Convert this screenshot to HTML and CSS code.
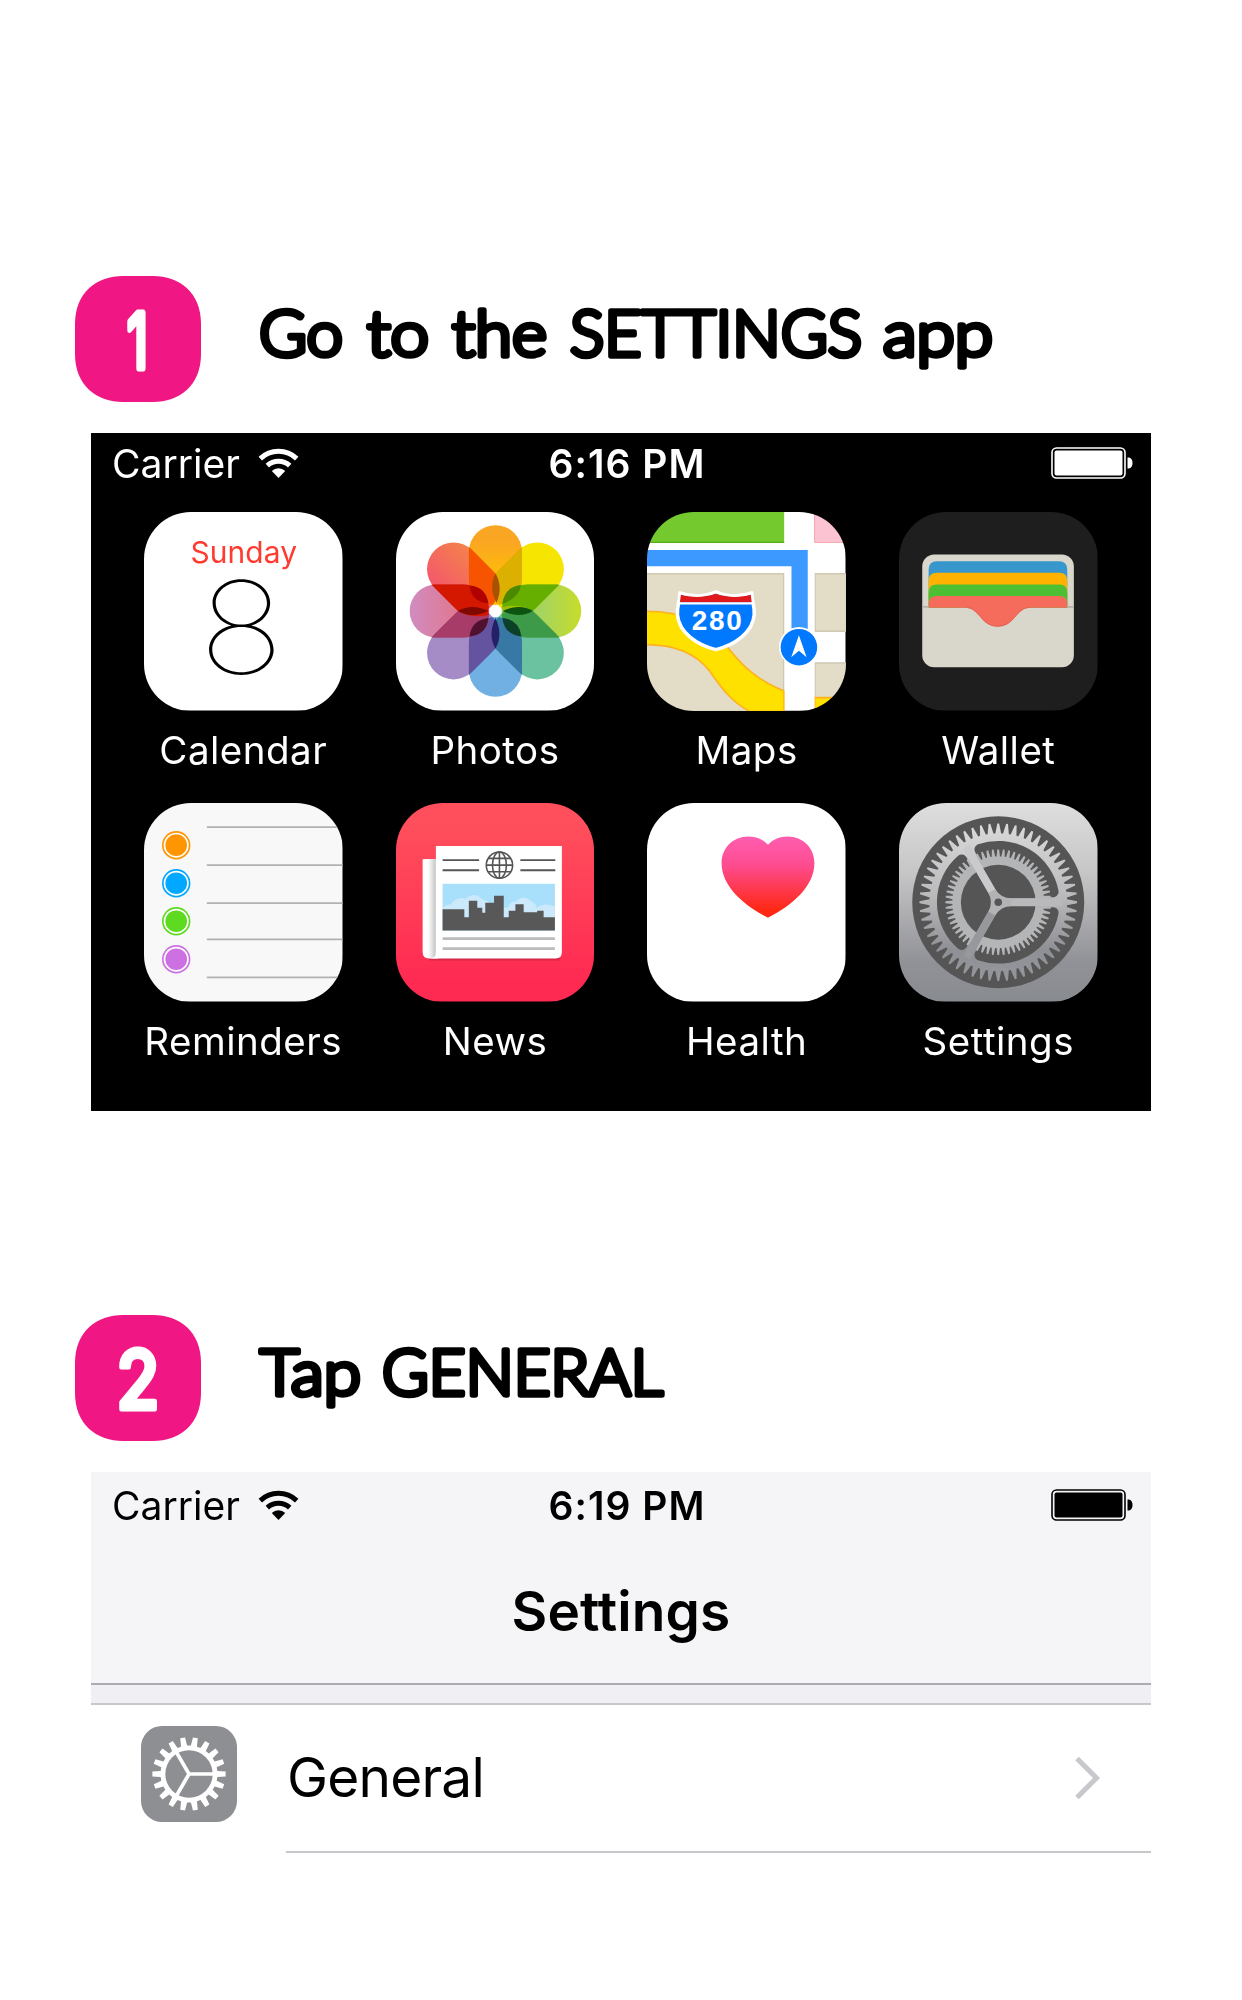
FILE: index.html
```html
<!DOCTYPE html>
<html lang="en">
<head>
<meta charset="utf-8">
<title>Setup steps</title>
<link rel="stylesheet" href="styles.css">
</head>
<body>
<main class="page">
  <section class="step">
    <header class="step-head">
      <svg class="badge" viewBox="0 0 126 126"><path class="badge-bg" d="M48 0H78C104 0 126 16 126 48V78C126 110 104 126 78 126H48C22 126 0 110 0 78V48C0 16 22 0 48 0Z"/><text class="digit one" transform="translate(62.500 92) scale(.66 1)">1</text></svg>
      <svg class="title" viewBox="0 0 800 126">
        <text x="2" y="79.500" textLength="84" lengthAdjust="spacingAndGlyphs">Go</text>
        <text x="110" y="79.500" textLength="62" lengthAdjust="spacingAndGlyphs">to</text>
        <text x="195" y="79.500" textLength="95" lengthAdjust="spacingAndGlyphs">the</text>
        <text x="313" y="79.500" textLength="292" lengthAdjust="spacingAndGlyphs">SETTINGS</text>
        <text x="626" y="79.500" textLength="110" lengthAdjust="spacingAndGlyphs">app</text>
      </svg>
    </header>
    <div class="screen home">
      <div class="status">
        <div class="carrier">Carrier
          <svg class="wifi" viewBox="0 0 41 32"><path class="arc" d="M2.300 11.600A26.500 26.500 0 0 1 38.700 11.600M9.300 18.700A16.500 16.500 0 0 1 31.700 18.700"/><path class="tip" d="M20.500 31L13.800 24A9.500 9.500 0 0 1 27.200 24Z"/></svg>
        </div>
        <div class="clock">6:16 PM</div>
        <svg class="battery" viewBox="0 0 82 32"><rect class="shell" x="1" y="1" width="73" height="30" rx="4.500"/><rect class="charge" x="3.500" y="3.500" width="68" height="25" rx="2"/><path class="charge" d="M76.500 10.500C80 10.500 81.500 12.500 81.500 16S80 21.500 76.500 21.500Z"/></svg>
      </div>
      <div class="apps">
        <figure class="app">
          <svg class="icon" viewBox="0 0 199 199"><rect width="199" height="199" fill="#fff"/><text class="weekday" x="100" y="51" textLength="107">Sunday</text><text class="day" transform="translate(97.500 162.500) scale(1.110 1)">8</text></svg>
          <figcaption>Calendar</figcaption>
        </figure>
        <figure class="app">
          <svg class="icon" viewBox="0 0 199 199">
            <defs>
              <linearGradient id="pOrange" x1="0" y1="0" x2="0" y2="1"><stop offset=".2" stop-color="#faa623"/><stop offset=".8" stop-color="#ffc400"/></linearGradient>
              <linearGradient id="pRed" x1="0" y1="0" x2="1" y2="0"><stop offset="0" stop-color="#f4586a"/><stop offset="1" stop-color="#f4824c"/></linearGradient>
              <linearGradient id="pLime" x1="0" y1="0" x2="0" y2="1"><stop offset="0" stop-color="#c8dc2a"/><stop offset=".5" stop-color="#a5d45e"/></linearGradient>
              <linearGradient id="pPink" x1="0" y1="0" x2="0" y2="1"><stop offset="0" stop-color="#d08cc0"/><stop offset=".6" stop-color="#e07890"/></linearGradient>
            </defs>
            <rect width="199" height="199" fill="#fff"/>
            <g class="petals" transform="translate(99.700 99.200)">
              <rect x="-26.600" y="-86" width="53.200" height="80" rx="26.600" fill="url(#pOrange)"/>
              <rect x="-26.600" y="-86" width="53.200" height="80" rx="26.600" fill="#f6e500" transform="rotate(45)"/>
              <rect x="-26.600" y="-86" width="53.200" height="80" rx="26.600" fill="url(#pLime)" transform="rotate(90)"/>
              <rect x="-26.600" y="-86" width="53.200" height="80" rx="26.600" fill="#6bc2a0" transform="rotate(135)"/>
              <rect x="-26.600" y="-86" width="53.200" height="80" rx="26.600" fill="#70b0e2" transform="rotate(180)"/>
              <rect x="-26.600" y="-86" width="53.200" height="80" rx="26.600" fill="#a58cc6" transform="rotate(225)"/>
              <rect x="-26.600" y="-86" width="53.200" height="80" rx="26.600" fill="url(#pPink)" transform="rotate(270)"/>
              <rect x="-26.600" y="-86" width="53.200" height="80" rx="26.600" fill="url(#pRed)" transform="rotate(315)"/>
            </g>
            <g transform="translate(99.700 99.200)">
              <path fill="#dcb000" d="M4 -7Q-8 -24 0 -37.600L26.600 -64.200V-32.600Q26 -12 9 -7Z"/>
              <path fill="#66ae00" d="M7 -9Q12 -26.600 32.600 -26.600H64.200L37.600 0Q24 -8 7 -4Z"/>
              <path fill="#3c9a48" d="M7 4Q24 -8 37.600 0L64.200 26.600H32.600Q12 26.600 7 9Z"/>
              <path fill="#3878a4" d="M4 7Q-8 24 0 37.600L26.600 64.200V32.600Q26 12 9 7Z"/>
              <path fill="#6454a0" d="M-4 7Q8 24 0 37.600L-26.600 64.200V32.600Q-26 12 -9 7Z"/>
              <path fill="#a83c68" d="M-7 4Q-24 -8 -37.600 0L-64.200 26.600H-32.600Q-12 26.600 -7 9Z"/>
              <path fill="#d41800" d="M-7 -9Q-12 -26.600 -32.600 -26.600H-64.200L-37.600 0Q-24 8 -7 4Z"/>
              <path fill="#f65400" d="M-4 -7Q8 -24 0 -37.600L-26.600 -64.200V-32.600Q-26 -12 -9 -7Z"/>
              <path fill="#a85200" d="M0 -37.600Q8 -24 1 -8Q-7 -24 0 -37.600Z"/>
              <path fill="#4c8800" d="M7 -7Q9 -24 25.500 -26Q24 -13 7 -7Z"/>
              <path fill="#0c5410" d="M7 0Q24 -8 37.600 0Q24 8 7 0Z"/>
              <path fill="#0c4028" d="M7 7Q24 9 26 25.500Q9 24 7 7Z"/>
              <path fill="#242068" d="M0 7Q8 24 0 37.600Q-8 24 0 7Z"/>
              <path fill="#501030" d="M-7 7Q-24 9 -26 25.500Q-9 24 -7 7Z"/>
              <path fill="#800800" d="M-7 0Q-24 8 -37.600 0Q-24 -8 -7 0Z"/>
              <path fill="#b00000" d="M-7 -7Q-24 -9 -26 -25.500Q-9 -24 -7 -7Z"/>
            </g>
            <circle cx="99.700" cy="99.200" r="6" fill="#fff"/>
          </svg>
          <figcaption>Photos</figcaption>
        </figure>
        <figure class="app">
          <svg class="icon" viewBox="0 0 199 199">
            <rect width="199" height="199" fill="#fff"/>
            <path fill="#74c92f" d="M0 0H137.500V31H0Z"/><path fill="#58b010" d="M0 29.800H137.500V31H0Z"/>
            <path fill="#fcc3d2" stroke="#f3a9ae" d="M168 -1H200V30.500H168Z"/>
            <path fill="#e3dcc7" stroke="#d0c8b2" stroke-width="1.500" d="M-1 62H137V200H-1ZM168.500 62H200V119.500H168.500ZM168.500 151.500H200V200H168.500Z"/>
            <path fill="#ffe100" stroke="#ffb21c" stroke-width="1.700" d="M-1 99.500C32 99.500 62 110 82 137C98 157 112 169 137.400 179.500V200H103C82 189 72 172 62 158.500C48 141 28 133 -1 133ZM168 186H200V200H168Z"/>
            <path fill="#fff" d="M138 61H168V199H138Z"/>
            <path fill="none" stroke="#3b99ff" stroke-width="16.300" d="M0 46.200H153V120"/>
            <path fill="#0079ff" stroke="#fff" stroke-width="3.500" stroke-linejoin="round" d="M33 81C44 85 57 85 69 80C81 85 94 85 105 81C105 90 108 93 107.500 103C106 121 88 133 69 138C50 133 32 121 30.500 103C30 93 33 90 33 81Z"/>
            <path fill="#df191e" d="M34 83C45 86 57 86 69 82C81 86 93 86 104 83L105 90.500H33Z"/><path fill="#fff" d="M32 90.500H106V92.700H32Z"/>
            <text class="route" x="70" y="118.700" textLength="50">280</text>
            <circle cx="152.300" cy="135.300" r="20" fill="#fff"/><circle cx="152.300" cy="135.500" r="18.300" fill="#0079ff"/>
            <path fill="#fff" d="M152.300 123.500L160 145.500L152.300 139L144.600 145.500Z"/>
          </svg>
          <figcaption>Maps</figcaption>
        </figure>
        <figure class="app">
          <svg class="icon" viewBox="0 0 199 199">
            <rect width="199" height="199" fill="#1e1e1e"/>
            <rect x="23.300" y="42.700" width="152" height="113" rx="12" fill="#d9d6cb"/>
            <path fill="#3797cd" d="M29.700 96V58Q29.700 49.300 38 49.300H160.500Q168.700 49.300 168.700 58V96Z"/>
            <path fill="#ffb200" d="M29.700 96V69Q29.700 61 38 61H160.500Q168.700 61 168.700 69V96Z"/>
            <path fill="#4dbf33" d="M29.700 96V81Q29.700 72.700 38 72.700H160.500Q168.700 72.700 168.700 81V96Z"/>
            <path fill="#f66c5c" d="M29.700 96V92Q29.700 84.300 38 84.300H160.500Q168.700 84.300 168.700 92V96H131C117 97 116 115 99 115S81 97 67 96Z"/>
            <path fill="none" stroke="#d55a4a" stroke-width="1" opacity=".6" d="M68 95.500C82 97 82 114.500 99 114.500S116 97 130 95.500"/>
            <path fill="#b5b2ab" d="M23.300 94.300H29.700V96H23.300ZM168.700 94.300H175.300V96H168.700Z"/>
          </svg>
          <figcaption>Wallet</figcaption>
        </figure>
        <figure class="app">
          <svg class="icon" viewBox="0 0 199 199">
            <rect width="199" height="199" fill="#f8f8f8"/>
            <path stroke="#b1b1b1" stroke-width="1.700" d="M63 24.200H199M63 62.300H199M63 100.300H199M63 136.700H199M63 174.800H199"/>
            <g stroke-width="1.700">
              <g stroke="#ff9500" fill="#ff9500"><circle cx="32.300" cy="42.300" r="13.400" fill="#fff"/><circle cx="32.300" cy="42.300" r="10"/></g>
              <g stroke="#00a8ff" fill="#00a8ff"><circle cx="32.300" cy="80.400" r="13.400" fill="#fff"/><circle cx="32.300" cy="80.400" r="10"/></g>
              <g stroke="#5edb20" fill="#5edb20"><circle cx="32.300" cy="118.500" r="13.400" fill="#fff"/><circle cx="32.300" cy="118.500" r="10"/></g>
              <g stroke="#cc70e2" fill="#cc70e2"><circle cx="32.300" cy="156.600" r="13.400" fill="#fff"/><circle cx="32.300" cy="156.600" r="10"/></g>
            </g>
          </svg>
          <figcaption>Reminders</figcaption>
        </figure>
        <figure class="app">
          <svg class="icon" viewBox="0 0 199 199">
            <defs>
              <linearGradient id="newsBg" x1="0" y1="0" x2="0" y2="1"><stop offset=".1" stop-color="#ff4f5c"/><stop offset=".9" stop-color="#ff2a52"/></linearGradient>
              <linearGradient id="fold" x1="0" y1="0" x2="1" y2="0"><stop offset=".35" stop-color="#fff"/><stop offset="1" stop-color="#c4c4c4"/></linearGradient>
            </defs>
            <rect width="199" height="199" fill="url(#newsBg)"/>
            <path fill="#c92444" opacity=".7" d="M30 154H164V158H34Z"/>
            <path fill="#fff" d="M26.700 56.300H42V156H33Q26.700 156 26.700 149.500Z"/>
            <path fill="url(#fold)" d="M28 56.300H40V153Q39 156 34 155Q28 153 28 149Z"/>
            <path fill="#fff" d="M40 43H166.300V149.500Q166.300 156 160 156H34Q40 156 40 150Z"/>
            <path stroke="#555" stroke-width="1.800" d="M46.700 57.300H83.300M46.700 67.400H83.300M124.700 57.300H159.700M124.700 67.400H159.700"/>
            <g fill="none" stroke="#555" stroke-width="1.600"><circle cx="103.700" cy="62.300" r="13.200"/><ellipse cx="103.700" cy="62.300" rx="7" ry="13.200"/><path d="M103.700 49V75.500M90.500 62.300H117M92.500 55.500H115M92.500 69H115"/></g>
            <path fill="#a8dffb" d="M46.700 81H159.300V127.700H46.700Z"/>
            <path fill="#cbe9fb" d="M46.700 106Q51 101 55 102Q60 93 70 96Q79 88 87 97Q94 98 96 105H112Q116 97 120 99Q127 91 135 98Q140 100 141 105Q149 99 159.300 104V128H46.700Z"/>
            <path fill="#585858" d="M46.700 106.500H68.500V114.500H73V98H81.500V105H86.500V110H89.500V100H98.300V93H108V114.500H113V108H119.700V101.500H128V109.500H141.500V108H148V114.500H159.300V127.700H46.700Z"/>
            <path stroke="#bcbcbc" stroke-width="2.600" d="M46.700 136H159.300M46.700 146H159.300"/>
          </svg>
          <figcaption>News</figcaption>
        </figure>
        <figure class="app">
          <svg class="icon" viewBox="0 0 199 199">
            <defs><linearGradient id="heart" x1="0" y1="0" x2="0" y2="1"><stop offset="0" stop-color="#ff5eb0"/><stop offset=".35" stop-color="#fd4c90"/><stop offset=".9" stop-color="#ff2815"/></linearGradient></defs>
            <rect width="199" height="199" fill="#fff"/>
            <path fill="url(#heart)" transform="translate(.8 .4)" d="M120.500 41.500C126 36 132 33.300 140 33.300C156 33.300 167 45 167 60C167 83 145 102 120.500 114.700C96 102 74 83 74 60C74 45 85 33.300 101 33.300C109 33.300 115 36 120.500 41.500Z"/>
          </svg>
          <figcaption>Health</figcaption>
        </figure>
        <figure class="app">
          <svg class="icon" viewBox="0 0 199 199">
            <defs>
              <linearGradient id="steel" x1="0" y1="0" x2="0" y2="1"><stop offset="0" stop-color="#dedede"/><stop offset=".35" stop-color="#c6c6c7"/><stop offset=".8" stop-color="#919297"/><stop offset="1" stop-color="#888b90"/></linearGradient>
              <linearGradient id="ring" gradientUnits="userSpaceOnUse" x1="0" y1="-80" x2="0" y2="80"><stop offset="0" stop-color="#dadadb"/><stop offset=".45" stop-color="#bbbbbd"/><stop offset=".8" stop-color="#8f9095"/><stop offset="1" stop-color="#96979c"/></linearGradient>
              <clipPath id="slots">
                <path id="sector" d="M6 4H61.500A61.500 61.500 0 0 1 -27.300 55.300L.5 7.200Z"/>
                <use href="#sector" transform="rotate(120)"/><use href="#sector" transform="rotate(240)"/>
              </clipPath>
            </defs>
            <rect width="199" height="199" fill="url(#steel)"/>
            <g transform="translate(99.500 99.500)">
              <circle r="86.200" fill="#555"/>
              <path data-teeth="56" data-root="69" data-tip="79" data-base=".38" data-end=".1" fill="url(#ring)"/>
              <g fill="#555" stroke="#555" stroke-width="11" stroke-linejoin="round">
                <path id="slot" d="M10 10.500H55A56 56 0 0 1 -18.400 52.900L5 13.500Z"/>
                <use href="#slot" transform="rotate(120)"/><use href="#slot" transform="rotate(240)"/>
              </g>
              <g clip-path="url(#slots)">
                <path data-teeth="60" data-root="46" data-tip="53" data-base=".36" data-end=".16" fill="#b4b5b7"/>
                <circle r="37.500" fill="#555"/>
              </g>
              <g fill="none" stroke-width="7.600">
                <path stroke="#97989c" d="M-2 3.500L-32 55.400"/>
                <path stroke="#cacacc" d="M-2 -3.500L-32 -55.400"/>
                <path stroke="#b9b9bb" d="M4 0H64"/>
              </g>
              <path fill="#b3b3b6" d="M13 -3.700V3.700Q3 4 -3.300 13L-9.700 9.400Q-5 0 -9.700 -9.400L-3.300 -13Q3 -4 13 -3.700Z"/>
              <circle r="3.800" fill="#555"/>
            </g>
          </svg>
          <figcaption>Settings</figcaption>
        </figure>
      </div>
    </div>
  </section>

  <section class="step">
    <header class="step-head">
      <svg class="badge" viewBox="0 0 126 126"><path class="badge-bg" d="M48 0H78C104 0 126 16 126 48V78C126 110 104 126 78 126H48C22 126 0 110 0 78V48C0 16 22 0 48 0Z"/><text class="digit" transform="translate(63 93.500) scale(.86 1)">2</text></svg>
      <svg class="title" viewBox="0 0 800 126">
        <text x="3" y="79.500" textLength="101" lengthAdjust="spacingAndGlyphs">Tap</text>
        <text x="125" y="79.500" textLength="281" lengthAdjust="spacingAndGlyphs">GENERAL</text>
      </svg>
    </header>
    <div class="screen settings">
      <div class="status">
        <div class="carrier">Carrier
          <svg class="wifi" viewBox="0 0 41 32"><path class="arc" d="M2.300 11.600A26.500 26.500 0 0 1 38.700 11.600M9.300 18.700A16.500 16.500 0 0 1 31.700 18.700"/><path class="tip" d="M20.500 31L13.800 24A9.500 9.500 0 0 1 27.200 24Z"/></svg>
        </div>
        <div class="clock">6:19 PM</div>
        <svg class="battery" viewBox="0 0 82 32"><rect class="shell" x="1" y="1" width="73" height="30" rx="4.500"/><rect class="charge" x="3.500" y="3.500" width="68" height="25" rx="2"/><path class="charge" d="M76.500 10.500C80 10.500 81.500 12.500 81.500 16S80 21.500 76.500 21.500Z"/></svg>
      </div>
      <h2 class="nav-title">Settings</h2>
      <div class="divider"></div>
      <div class="row">
        <svg class="row-icon" viewBox="0 0 96 96">
          <rect width="96" height="96" rx="21" fill="#8e8f93"/>
          <g transform="translate(48 48)">
            <path data-teeth="18" data-root="28.500" data-tip="36.700" data-base=".31" data-end=".19" fill="#fff"/>
            <circle r="23.700" fill="#8e8f93"/>
            <path fill="none" stroke="#fff" stroke-width="3.600" d="M0 0H26M0 0L-13 -22.500M0 0L-13 22.500"/>
          </g>
        </svg>
        <div class="row-body">
          <span class="row-label">General</span>
          <svg class="chevron" viewBox="0 0 26 44"><path d="M2 2.500L21.500 22L2 41.500"/></svg>
        </div>
      </div>
    </div>
  </section>
</main>
<script src="gears.js"></script>
</body>
</html>
```
FILE: styles.css
```css
* { box-sizing: border-box; }
body { margin: 0; background: #fff; color: #000; font-family: Inter, "Liberation Sans", sans-serif; }
.page { width: 1242px; height: 2000px; padding: 276px 91px 0 75px; display: flex; flex-direction: column; gap: 204px; overflow: hidden; }
.step-head { display: flex; gap: 56px; height: 126px; margin-bottom: 31px; }
.badge { width: 126px; height: 126px; flex: none; }
.badge-bg { fill: #f01683; }
.digit { font: 500 81px Inter, sans-serif; fill: #fff; stroke: #fff; stroke-width: 5px; stroke-linejoin: round; text-anchor: middle; }
.one { font-size: 76px; font-weight: 400; stroke-width: 7px; }
.title { width: 800px; height: 126px; flex: none; }
.title text { font: 300 64px Lato, sans-serif; fill: #000; stroke: #000; stroke-width: 5.6px; stroke-linejoin: round; }
.screen { width: 1060px; margin-left: 16px; display: flex; flex-direction: column; }
.home { height: 678px; background: #000; color: #fff; }
.settings { background: #f5f5f7; }
.status { display: grid; grid-template-columns: 1fr auto 1fr; align-items: center; height: 60px; padding: 0 18px 0 21px; font-size: 39px; }
.settings .status { height: 66px; }
.carrier { display: flex; align-items: center; gap: 18px; }
.clock { font-weight: 600; font-size: 39px; letter-spacing: 1px; margin-left: 9px; }
.wifi { width: 41px; height: 32px; }
.arc { fill: none; stroke: currentColor; stroke-width: 5px; }
.tip, .charge { fill: currentColor; }
.battery { width: 82px; height: 32px; justify-self: end; }
.shell { fill: none; stroke: currentColor; stroke-width: 1.6px; }
.apps { display: grid; grid-template-columns: repeat(4, 198.500px); column-gap: 53.200px; padding: 19px 0 0 53px; grid-auto-rows: 291px; }
.app { margin: 0; display: flex; flex-direction: column; align-items: center; }
.icon { width: 198.500px; height: 198.500px; border-radius: 47px; }
.app figcaption { margin-top: 14px; font-size: 38.500px; line-height: 50px; letter-spacing: .5px; white-space: nowrap; }
.weekday { font-size: 30px; fill: #ff3b30; text-anchor: middle; }
.day { font-size: 129px; font-weight: 100; text-anchor: middle; }
.route { font: 700 28px "Liberation Sans", sans-serif; fill: #fff; text-anchor: middle; }
.petals { isolation: isolate; }
.petals rect { mix-blend-mode: multiply; }
.nav-title { margin: 0; height: 145px; padding-top: 38px; font-size: 55px; line-height: 70px; font-weight: 600; letter-spacing: .1px; text-align: center; }
.divider { height: 22px; background: #efeff4; border-top: 2px solid #acacb0; border-bottom: 2px solid #c8c7cc; }
.row { display: flex; align-items: flex-start; background: #fff; padding-left: 50px; }
.row-icon { width: 96px; height: 96px; margin-top: 21px; }
.row-body { flex: 1; display: flex; justify-content: space-between; align-items: center; height: 148px; margin-left: 49px; padding: 0 50px 0 0; border-bottom: 2px solid #c8c7cc; }
.row-label { font-size: 55px; letter-spacing: -.8px; padding: 0 0 3px 1px; }
.chevron { width: 26px; height: 44px; }
.chevron path { fill: none; stroke: #c7c7cc; stroke-width: 5px; }
```
FILE: gears.js
```js
// Builds the toothed outline of every gear path from its data attributes.
document.querySelectorAll('[data-teeth]').forEach(function (path) {
  var d = path.dataset;
  var count = Number(d.teeth), root = Number(d.root), tip = Number(d.tip);
  var base = Number(d.base), end = Number(d.end);
  var points = [];
  for (var i = 0; i < count; i++) {
    [[root, -base], [tip, -end], [tip, end], [root, base]].forEach(function (p) {
      var a = (i + p[1]) * 2 * Math.PI / count;
      points.push((p[0] * Math.cos(a)).toFixed(2) + ' ' + (p[0] * Math.sin(a)).toFixed(2));
    });
  }
  path.setAttribute('d', 'M' + points.join('L') + 'Z');
});
```
